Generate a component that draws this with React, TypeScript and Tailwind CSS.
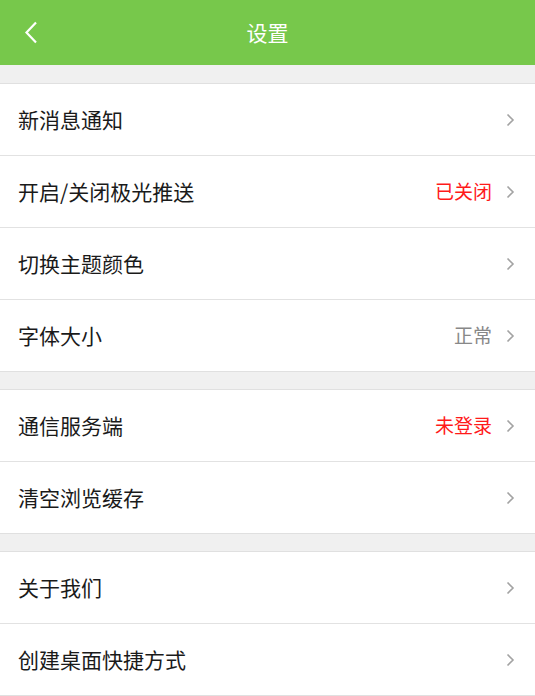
import React from 'react';

type Item = { label: string; value?: string; tone?: 'red' | 'gray' };

const groups: Item[][] = [
    [
        { label: '新消息通知' },
        { label: '开启/关闭极光推送', value: '已关闭', tone: 'red' },
        { label: '切换主题颜色' },
        { label: '字体大小', value: '正常', tone: 'gray' },
    ],
    [
        { label: '通信服务端', value: '未登录', tone: 'red' },
        { label: '清空浏览缓存' },
    ],
    [
        { label: '关于我们' },
        { label: '创建桌面快捷方式' },
    ],
];

function Chevron() {
    return (
        <svg width="9" height="14" viewBox="0 0 9 14" className="shrink-0">
            <path d="M1.5 1.5 L7 7 L1.5 12.5" fill="none" stroke="#a3a3a3" strokeWidth="1.6" />
        </svg>
    );
}

function Row({ item, last }: { item: Item; last: boolean }) {
    return (
        <div className={`flex items-center bg-white pl-[18px] pr-[20px] ${last ? 'h-[71px]' : 'h-[72px] border-b border-[#e2e2e2]'}`}>
            <span className="flex-1 text-[21px] text-[#1a1a1a]">{item.label}</span>
            {item.value && (
                <span className={`mr-[14px] text-[19px] ${item.tone === 'red' ? 'text-[#ff1a1a]' : 'text-[#888888]'}`}>
                    {item.value}
                </span>
            )}
            <Chevron />
        </div>
    );
}

export default function App() {
    return (
        <div
            className="min-h-screen bg-[#f0f0f0]"
            style={{ fontFamily: '"Noto Sans CJK SC", "Noto Sans", sans-serif' }}
        >
            <header className="relative flex h-[65px] items-center justify-center bg-[#77c84b]">
                <button className="absolute left-[24px] top-[21px] p-0">
                    <svg width="14" height="23" viewBox="0 0 14 23">
                        <path d="M12 1.5 L2.5 11.5 L12 21.5" fill="none" stroke="#ffffff" strokeWidth="2.2" />
                    </svg>
                </button>
                <h1 className="text-[21px] text-white">设置</h1>
            </header>
            <div className="flex flex-col gap-[17px] pt-[18px]">
                {groups.map((g, i) => (
                    <div key={i} className="border-y border-[#e0e0e0]">
                        {g.map((item, j) => (
                            <Row key={item.label} item={item} last={j === g.length - 1} />
                        ))}
                    </div>
                ))}
            </div>
        </div>
    );
}
